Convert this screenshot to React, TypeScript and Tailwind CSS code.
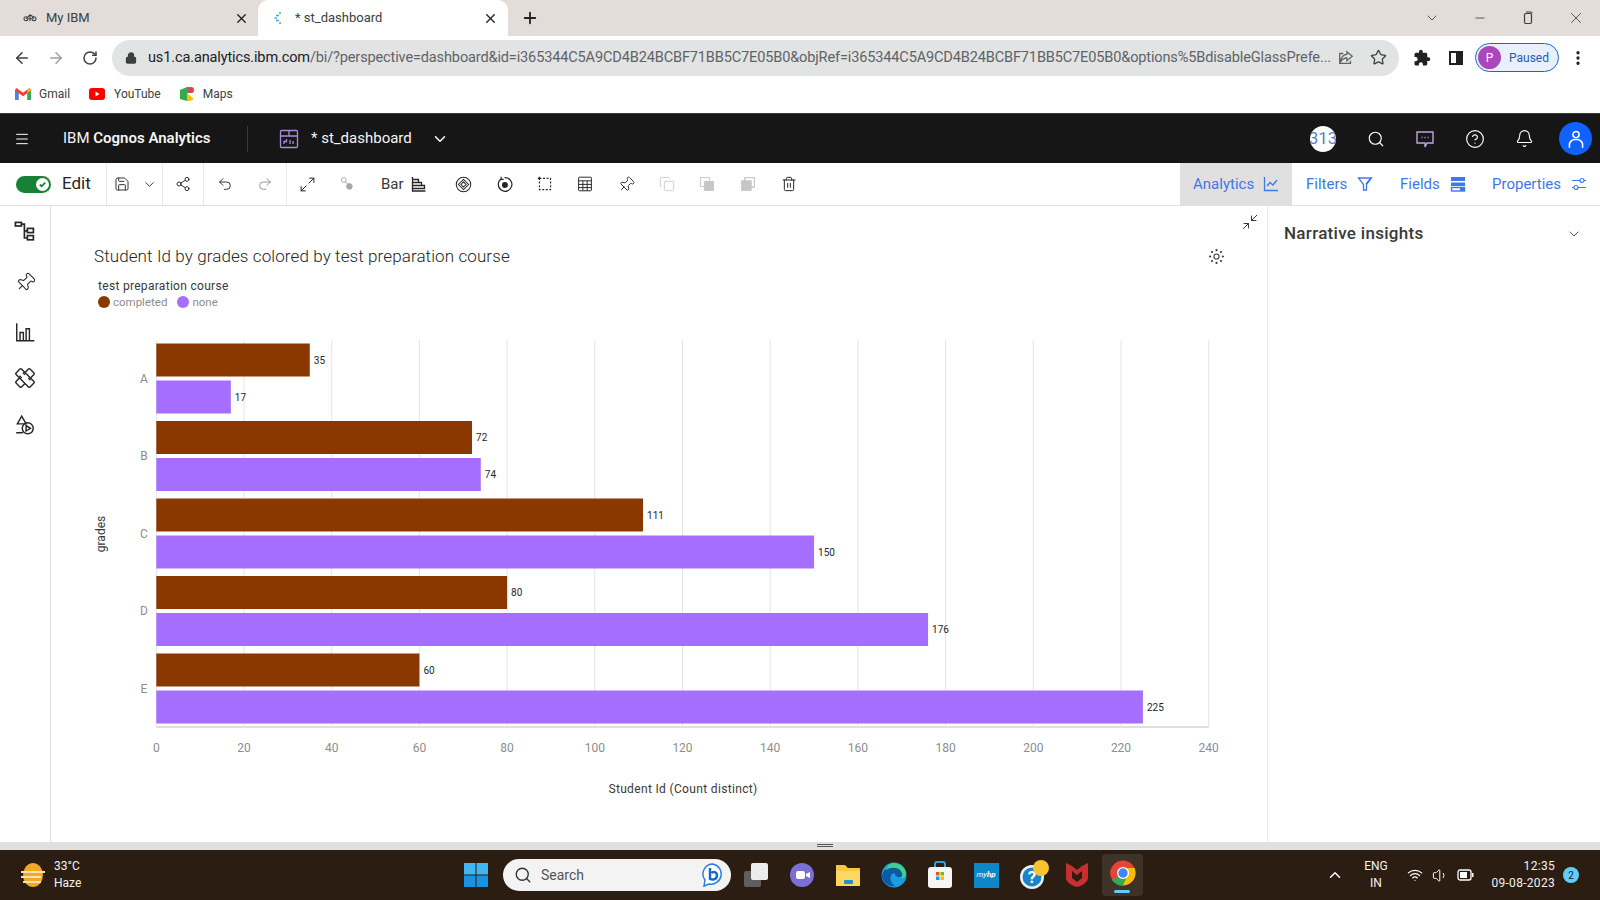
import React from "react";
import { ArrowLeft, ArrowRight, RotateCw, Lock, Star, Plus, X, Minus, ChevronDown, Menu, Search, CircleHelp, Bell, Save, Share2, Undo2, Redo2, Maximize2, Minimize2, Trash2, Pin, Copy, EllipsisVertical, ChevronUp, Wifi, Volume1 } from "lucide-react";

const GRADES = [
  { g: "A", c: 35, n: 17 },
  { g: "B", c: 72, n: 74 },
  { g: "C", c: 111, n: 150 },
  { g: "D", c: 80, n: 176 },
  { g: "E", c: 60, n: 225 },
];
const X0 = 156.3;
const U = 4.385;
const TICKS = [0, 20, 40, 60, 80, 100, 120, 140, 160, 180, 200, 220, 240];

function Chart() {
  return (
    <svg viewBox="51 320 1216 490" className="w-[1216px] h-[490px] block mt-[10px]" fontFamily="Roboto, sans-serif">
      {TICKS.map((t) => (
        <line key={t} x1={X0 + t * U} x2={X0 + t * U} y1={340} y2={727} stroke="#e4e4e4" strokeWidth={1} />
      ))}
      <line x1={X0} x2={X0 + 240 * U} y1={727} y2={727} stroke="#d4d4d4" strokeWidth={1.5} />
      {GRADES.map((d, i) => {
        const y = 343.5 + i * 77.5;
        return (
          <g key={d.g}>
            <rect x={X0} y={y} width={d.c * U} height={33} fill="#8a3800" />
            <rect x={X0} y={y + 37} width={d.n * U} height={33} fill="#a56eff" />
            <text x={X0 + d.c * U + 4} y={y + 20} fontSize={10} fill="#262626">{d.c}</text>
            <text x={X0 + d.n * U + 4} y={y + 57} fontSize={10} fill="#262626">{d.n}</text>
            <text x={144} y={y + 39} fontSize={12} fill="#8d8d8d" textAnchor="middle">{d.g}</text>
          </g>
        );
      })}
      {TICKS.map((t) => (
        <text key={t} x={X0 + t * U} y={752} fontSize={12} fill="#8d8d8d" textAnchor="middle">{t}</text>
      ))}
      <text x={683} y={793} fontSize={12} letterSpacing={0.34} fill="#393939" textAnchor="middle">Student Id (Count distinct)</text>
      <text transform="translate(105 534) rotate(-90)" fontSize={12} fill="#393939" textAnchor="middle">grades</text>
    </svg>
  );
}

function Ic({ children, s = 20, c = "none", stroke = "currentColor", w = 1.4, vb = "0 0 20 20" }: { children: React.ReactNode; s?: number; c?: string; stroke?: string; w?: number; vb?: string }) {
  return (
    <svg width={s} height={s} viewBox={vb} fill={c} stroke={stroke} strokeWidth={w} className="block shrink-0">
      {children}
    </svg>
  );
}

function Cell({ className, children }: { className: string; children: React.ReactNode }) {
  return <div className={`flex items-center justify-center shrink-0 ${className}`}>{children}</div>;
}

function TabBar() {
  return (
    <div className="flex h-[36px] bg-[#e3dcd8] shrink-0 text-[13px] text-[#3c4043] items-center">
      <div className="flex items-center w-[258px] h-full">
        <div className="ml-[21px] w-[18px] flex justify-center">
          <Ic s={16} w={1.3}>
            <circle cx="5" cy="11" r="2.5" />
            <circle cx="15" cy="11" r="2.5" />
            <path d="M5 11l4-4h3l3 4M8 11h4M10 5v9" />
          </Ic>
        </div>
        <span className="ml-[7px]">My IBM</span>
        <X size={15} strokeWidth={2.2} className="ml-auto mr-[9px] text-[#202124]" />
      </div>
      <div className="flex items-center w-[250px] h-full bg-white rounded-t-[10px]">
        <div className="ml-[15px] w-[10px]">
          <Ic s={12} stroke="#4ba3d9" w={1.4} vb="0 0 12 12">
            <path d="M8 1H6M6 3.5H3M4 6H1.5M6 8.5H3M8 11H6" />
          </Ic>
        </div>
        <span className="ml-[12px]">* st_dashboard</span>
        <X size={15} strokeWidth={2.2} className="ml-auto mr-[10px] text-[#202124]" />
      </div>
      <Plus size={18} strokeWidth={2.4} className="ml-[13px] text-[#202124]" />
      <div className="ml-auto flex text-[#3c3c3c]">
        <Cell className="w-[48px]"><ChevronDown size={16} strokeWidth={1.2} /></Cell>
        <Cell className="w-[48px]"><Minus size={14} strokeWidth={1.4} /></Cell>
        <Cell className="w-[48px]">
          <Ic s={14} w={1.2} vb="0 0 14 14"><rect x="3.5" y="2.5" width="7" height="10" rx="1.5" /><path d="M5 1h4.5a1.5 1.5 0 0 1 1.5 1.5" /></Ic>
        </Cell>
        <Cell className="w-[48px]"><X size={18} strokeWidth={1.1} /></Cell>
      </div>
    </div>
  );
}

function UrlBar() {
  return (
    <div className="flex items-center h-[43px] bg-white shrink-0">
      <div className="flex pl-[5px] w-[112px] text-[#3c4043]">
        <Cell className="w-[34px]"><ArrowLeft size={18} strokeWidth={2} /></Cell>
        <Cell className="w-[34px] text-[#9aa0a6]"><ArrowRight size={18} strokeWidth={2} /></Cell>
        <Cell className="w-[34px]"><RotateCw size={16} strokeWidth={2.2} /></Cell>
      </div>
      <div className="flex items-center w-[1287px] h-[36px] rounded-full bg-[#e2e3e3]">
        <Lock size={12} strokeWidth={2.6} className="ml-[13px] text-[#3c4043] shrink-0" fill="#3c4043" />
        <span className="ml-[11px] text-[14.55px] tracking-[-0.01em] whitespace-nowrap text-[#5f6368] w-[1180px]">
          <span className="text-[#202124]">us1.ca.analytics.ibm.com</span>/bi/?perspective=dashboard&amp;id=i365344C5A9CD4B24BCBF71BB5C7E05B0&amp;objRef=i365344C5A9CD4B24BCBF71BB5C7E05B0&amp;options%5BdisableGlassPrefe...
        </span>
        <div className="ml-[9px]">
          <Ic s={18} stroke="#5f6368" w={1.4}>
            <path d="M11 3l6 5-6 5v-3c-3 0-5 1-7 4 0-4 3-8 7-8zM15 13v3H3V5h4" />
          </Ic>
        </div>
        <Star size={17} strokeWidth={1.8} className="ml-[15px] text-[#3c4043]" />
      </div>
      <Cell className="w-[44px] ml-[1px]">
        <Ic s={18} c="#202124" stroke="none" vb="0 0 24 24">
          <path d="M20.5 11H19V7a2 2 0 0 0-2-2h-4V3.5a2.5 2.5 0 0 0-5 0V5H4a2 2 0 0 0-2 2v3.8h1.5a2.7 2.7 0 0 1 0 5.4H2V20a2 2 0 0 0 2 2h3.8v-1.5a2.7 2.7 0 0 1 5.4 0V22H17a2 2 0 0 0 2-2v-4h1.5a2.5 2.5 0 0 0 0-5z" />
        </Ic>
      </Cell>
      <Cell className="w-[24px]">
        <Ic s={16} stroke="#202124" w={2} vb="0 0 16 16"><rect x="2" y="2" width="12" height="12" /><rect x="9" y="2" width="5" height="12" fill="#202124" /></Ic>
      </Cell>
      <div className="ml-[7px] flex items-center w-[84px] h-[29px] rounded-full border border-[#1a66c9] bg-[#e8f0fb]">
        <div className="ml-[2px] w-[23px] h-[23px] rounded-full bg-[#ab47bc] text-white text-[12px] flex items-center justify-center">P</div>
        <span className="ml-[8px] text-[12px] text-[#1a5fb4]">Paused</span>
      </div>
      <Cell className="w-[38px]"><EllipsisVertical size={18} strokeWidth={2.4} className="text-[#202124]" /></Cell>
    </div>
  );
}

function Bookmarks() {
  return (
    <div className="flex items-center h-[34px] bg-white shrink-0 text-[12px] text-[#3c4043] pl-[15px] pb-[4px]">
      <svg width="16" height="12" viewBox="0 0 16 12" className="block">
        <path d="M0 2v10h3.5V5L8 8.2 12.500 5v7H16V2L14.500 0 8 4.700 1.500 0z" fill="#ea4335" />
        <path d="M0 3v9h3.500V5z" fill="#4285f4" />
        <path d="M16 3v9h-3.500V5z" fill="#34a853" />
        <path d="M12.500 5L16 2.500 14.500 0l-2 1.500z" fill="#fbbc04" />
      </svg>
      <span className="ml-[8px]">Gmail</span>
      <svg width="16" height="12" viewBox="0 0 16 12" className="block ml-[19px]">
        <rect width="16" height="12" rx="3" fill="#f00" />
        <path d="M6.500 3.500v5l4-2.500z" fill="#fff" />
      </svg>
      <span className="ml-[9px]">YouTube</span>
      <svg width="16" height="16" viewBox="0 0 16 16" className="block ml-[18px]">
        <path d="M1 4l7-3v14l-7-2z" fill="#34a853" />
        <path d="M8 7l7 6-4 2-3 0z" fill="#fbbc04" />
        <path d="M8 1l4 0 2 6-6 0z" fill="#4285f4" />
        <circle cx="12" cy="4" r="3" fill="#ea4335" />
      </svg>
      <span className="ml-[8px]">Maps</span>
    </div>
  );
}

function AppHeader() {
  return (
    <div className="flex items-center h-[50px] bg-[#161616] shrink-0 text-white border-t border-[#393939]">
      <Cell className="w-[44px]"><Menu size={16} strokeWidth={1.5} /></Cell>
      <span className="ml-[19px] w-[184px] text-[15px] text-[#f4f4f4] whitespace-nowrap">IBM <b className="font-semibold">Cognos Analytics</b></span>
      <div className="w-px h-[26px] bg-[#393939]" />
      <div className="ml-[31px]">
        <Ic s={20} stroke="#a98bdc" w={1.3}>
          <rect x="1.500" y="1.500" width="17" height="17" rx="1" />
          <path d="M1.500 7h17M10 1.500V7M5 15v-2.500h2.500V10M11 15v-4M14 15v-3" />
        </Ic>
      </div>
      <span className="ml-[12px] text-[15px] text-[#f4f4f4] w-[110px] whitespace-nowrap">* st_dashboard</span>
      <ChevronDown size={18} strokeWidth={2} className="ml-[10px]" />
      <div className="ml-auto flex items-center">
        <div className="w-[26px] h-[26px] rounded-full bg-white text-[#5b7fc5] text-[17px] overflow-hidden flex items-center justify-center mr-[15px]">313</div>
        <Cell className="w-[49px]"><Search size={18} strokeWidth={1.5} /></Cell>
        <Cell className="w-[50px]">
          <Ic s={20} stroke="#bca6e0" w={1.4}>
            <path d="M2 3h16v11h-6l-2 4v-4H2z" />
            <path d="M6.500 8.500h1M9.500 8.500h1M12.500 8.500h1" />
          </Ic>
        </Cell>
        <Cell className="w-[50px]"><CircleHelp size={20} strokeWidth={1.4} /></Cell>
        <Cell className="w-[49px]"><Bell size={19} strokeWidth={1.4} /></Cell>
        <div className="ml-[10px] mr-[8px] w-[33px] h-[33px] rounded-full bg-[#0f62fe] flex items-center justify-center">
          <Ic s={22} stroke="#fff" w={1.4}>
            <circle cx="10" cy="6" r="2.800" />
            <path d="M4 18v-2.500a5 5 0 0 1 5-5h2a5 5 0 0 1 5 5V18" />
          </Ic>
        </div>
      </div>
    </div>
  );
}

function Tb({ children }: { children: React.ReactNode }) {
  return <Cell className="w-[40.7px] h-full">{children}</Cell>;
}

function ToolBar() {
  return (
    <div className="flex items-stretch h-[43px] bg-white shrink-0 border-b border-[#e0e0e0] text-[#262626]">
      <div className="w-[107px] flex items-center pl-[16px] border-r border-[#e8e8e8] shrink-0">
        <div className="w-[35px] h-[17px] rounded-full bg-[#198038] flex items-center justify-end pr-[2px]">
          <div className="w-[13px] h-[13px] rounded-full bg-white flex items-center justify-center">
            <Ic s={9} stroke="#198038" w={2} vb="0 0 10 10"><path d="M2 5l2 2 4-4" /></Ic>
          </div>
        </div>
        <span className="ml-[11px] text-[17px]">Edit</span>
      </div>
      <div className="w-[56px] flex items-center border-r border-[#e8e8e8] shrink-0 pl-[7px]">
        <Save size={16} strokeWidth={1.4} />
        <ChevronDown size={15} strokeWidth={1.4} className="ml-[12px]" />
      </div>
      <Cell className="w-[41px] border-r border-[#e8e8e8]"><Share2 size={16} strokeWidth={1.4} /></Cell>
      <div className="w-[83px] flex border-r border-[#e8e8e8] shrink-0">
        <Cell className="w-[41px]"><Undo2 size={16} strokeWidth={1.4} /></Cell>
        <Cell className="w-[40px] text-[#8d8d8d]"><Redo2 size={16} strokeWidth={1.4} /></Cell>
      </div>
      <Cell className="w-[40px]"><Maximize2 size={17} strokeWidth={1.4} /></Cell>
      <Cell className="w-[40px]">
        <Ic s={16} stroke="#a8a8a8" w={1.2}><circle cx="6" cy="5" r="3" /><circle cx="13" cy="13" r="3.500" fill="#a8a8a8" /><path d="M8 7l3 4" /></Ic>
      </Cell>
      <div className="w-[76px] shrink-0 flex items-center pl-[14px]">
        <span className="text-[15px] text-[#393939]">Bar</span>
        <div className="ml-[7px]">
          <Ic s={16} w={1.3} vb="0 0 16 16"><path d="M1.500 1v14h13M1.500 3.500h6v3h-6M1.500 6.500h9v3h-9M1.500 9.500h12v3h-12" /></Ic>
        </div>
      </div>
      <Tb>
        <Ic s={17} w={1.2}><circle cx="10" cy="10" r="8.500" /><path d="M10 4l6 6-6 6-6-6z" /><path d="M10 7l3 3-3 3-3-3z" /></Ic>
      </Tb>
      <Tb>
        <Ic s={17} w={1.4}><path d="M6 3.500a8 8 0 1 0 4-1.500M6 1v3h3" /><circle cx="10.500" cy="10.500" r="2.800" fill="currentColor" /></Ic>
      </Tb>
      <Tb>
        <Ic s={16} w={1.4}><path d="M3 3h14v14H3z" strokeDasharray="2.500 2" /><path d="M1 3h4M3 1v4" /></Ic>
      </Tb>
      <Tb>
        <Ic s={16} w={1.2}><rect x="2" y="1.500" width="16" height="17" rx="1" /><path d="M2 6h16M2 10.500h16M2 14.500h16M7.300 6v12.500M12.700 6v12.500" /></Ic>
      </Tb>
      <Tb><Pin size={17} strokeWidth={1.3} className="rotate-45" /></Tb>
      <Tb><Copy size={16} strokeWidth={1.3} className="text-[#c6c6c6]" /></Tb>
      <Tb>
        <Ic s={16} stroke="#c6c6c6" w={1.2}><rect x="2" y="2" width="11" height="11" /><rect x="7" y="7" width="11" height="11" fill="#c6c6c6" /></Ic>
      </Tb>
      <Tb>
        <Ic s={16} stroke="#c6c6c6" w={1.2}><rect x="6" y="2" width="12" height="12" fill="#fff" /><rect x="2" y="6" width="12" height="12" fill="#c6c6c6" /><rect x="6" y="2" width="12" height="12" /></Ic>
      </Tb>
      <Tb><Trash2 size={16} strokeWidth={1.5} /></Tb>
      <div className="ml-auto flex text-[#4178e8] text-[15px]">
        <div className="w-[112px] flex items-center justify-between pl-[13px] pr-[13px] bg-[#e0e0e0]">
          <span>Analytics</span>
          <Ic s={16} w={1.3} vb="0 0 16 16"><path d="M1.500 1v13.500H15M4 10l3-3.500 3 2.500 4-5" /></Ic>
        </div>
        <div className="w-[96px] flex items-center justify-between pl-[14px] pr-[15px]">
          <span>Filters</span>
          <Ic s={16} w={1.3} vb="0 0 16 16"><path d="M1.500 2h13L9.500 8.500V14h-3V8.500z" /><path d="M9 8l5-6" /></Ic>
        </div>
        <div className="w-[92px] flex items-center justify-between pl-[12px] pr-[14px]">
          <span>Fields</span>
          <Ic s={16} c="currentColor" stroke="none" vb="0 0 16 16"><rect x="1" y="1" width="14" height="4" /><rect x="1" y="6.500" width="14" height="3.500" /><rect x="1.500" y="11.500" width="13" height="3.500" fill="none" stroke="currentColor" /><rect x="10" y="11.500" width="5" height="3.500" /></Ic>
        </div>
        <div className="w-[120px] flex items-center justify-between pl-[12px] pr-[13px]">
          <span>Properties</span>
          <Ic s={16} w={1.2} vb="0 0 16 16"><path d="M1 4.500h8M13 4.500h2M1 11.500h2M7 11.500h8" /><circle cx="11" cy="4.500" r="2" /><circle cx="5" cy="11.500" r="2" /></Ic>
        </div>
      </div>
    </div>
  );
}

function LeftRail() {
  return (
    <div className="w-[51px] shrink-0 border-r border-[#e0e0e0] flex flex-col items-center pt-[1px] text-[#262626]">
      <Cell className="h-[50px]">
        <Ic s={24} w={1.4}>
          <rect x="2" y="2" width="5" height="3" />
          <rect x="12" y="7" width="5" height="3.500" />
          <rect x="12" y="13" width="5" height="3.500" />
          <path d="M7 3.500h2.500V15H12M9.500 9H12" />
        </Ic>
      </Cell>
      <Cell className="h-[50px]"><Pin size={21} strokeWidth={1.2} className="rotate-45" /></Cell>
      <Cell className="h-[50px]">
        <Ic s={22} w={1.3}><path d="M2.500 2v16h16M5.500 17.500v-7h3v7M11 17.500V7h3v10.500" /></Ic>
      </Cell>
      <Cell className="h-[42px]">
        <Ic s={22} w={1.3}>
          <rect x="6.500" y="1" width="7" height="18" rx="1" transform="rotate(45 10 10)" />
          <rect x="6.500" y="1" width="7" height="18" rx="1" transform="rotate(-45 10 10)" fill="#fff" />
          <path d="M5 8l2 2M8 5l2 2M13 10l2 2" />
        </Ic>
      </Cell>
      <Cell className="h-[52px]">
        <Ic s={22} w={1.3}><path d="M7 2l4 7H3zM2 17h6" /><circle cx="12.500" cy="13" r="5" /><path d="M11 10.500v5l4-2.500z" /></Ic>
      </Cell>
    </div>
  );
}

function ChartPanel() {
  return (
    <div className="w-[1216px] shrink-0 flex flex-col relative">
      <Minimize2 size={18} strokeWidth={1.2} className="absolute left-[1190px] top-[7px] text-[#262626]" />
      <div className="absolute left-[1157px] top-[42px] text-[#393939]">
        <svg width="17" height="17" viewBox="0 0 20 20" fill="currentColor" className="block">
          <circle cx="10" cy="10" r="3" fill="none" stroke="currentColor" strokeWidth="1.300" />
          <circle cx="10" cy="2.500" r="1.300" />
          <circle cx="10" cy="17.500" r="1.300" />
          <circle cx="2.500" cy="10" r="1.300" />
          <circle cx="17.500" cy="10" r="1.300" />
          <circle cx="4.700" cy="4.700" r="1.300" />
          <circle cx="15.300" cy="4.700" r="1.300" />
          <circle cx="4.700" cy="15.300" r="1.300" />
          <circle cx="15.300" cy="15.300" r="1.300" />
        </svg>
      </div>
      <h2 className="pl-[43px] pt-[38px] text-[17px] tracking-[0.1px] leading-[24px] font-light text-[#262626]">Student Id by grades colored by test preparation course</h2>
      <div className="pl-[47px] pt-[10px] text-[12px] leading-[16px]">
        <div className="text-[#393939] tracking-[0.3px]">test preparation course</div>
        <div className="flex items-center text-[#8d8d8d] text-[11.5px]">
          <span className="w-[12px] h-[12px] rounded-full bg-[#8a3800]" />
          <span className="ml-[3px]">completed</span>
          <span className="ml-[10px] w-[12px] h-[12px] rounded-full bg-[#a56eff]" />
          <span className="ml-[3px]">none</span>
        </div>
      </div>
      <Chart />
    </div>
  );
}

function RightPanel() {
  return (
    <div className="flex-1 border-l border-[#e8e8e8]">
      <div className="flex items-center justify-between pl-[16px] pr-[18px] pt-[15px]">
        <span className="text-[17px] tracking-[0.3px] font-medium text-[#393939]">Narrative insights</span>
        <ChevronDown size={16} strokeWidth={1.3} className="text-[#393939]" />
      </div>
    </div>
  );
}

function Taskbar() {
  return (
    <div className="flex items-center h-[50px] bg-[#2c1d12] shrink-0 text-white relative">
      <div className="w-[54px] pl-[21px] shrink-0">
        <svg width="24" height="26" viewBox="0 0 24 26" className="block">
          <ellipse cx="12" cy="13" rx="10" ry="12" fill="#f5a623" />
          <path d="M0 10h24M0 15h20M2 20h18" stroke="#fbe3ae" strokeWidth="2" />
        </svg>
      </div>
      <div className="w-[50px] shrink-0 text-[12px] leading-[17px] text-[#f2f2f2]">
        <div>33°C</div>
        <div>Haze</div>
      </div>
      <div className="ml-[360px] shrink-0">
        <svg width="24" height="24" viewBox="0 0 24 24" className="block">
          <rect width="11.500" height="11.500" fill="#3fb5f1" />
          <rect x="12.500" width="11.500" height="11.500" fill="#3fb5f1" />
          <rect y="12.500" width="11.500" height="11.500" fill="#1a93e0" />
          <rect x="12.500" y="12.500" width="11.500" height="11.500" fill="#1a93e0" />
        </svg>
      </div>
      <div className="ml-[15px] w-[228px] h-[32px] rounded-full bg-[#f3f3f3] flex items-center shrink-0 text-[#333]">
        <Search size={18} strokeWidth={1.8} className="ml-[11px]" />
        <span className="ml-[9px] text-[14px] text-[#555]">Search</span>
        <div className="ml-auto mr-[6px]">
          <svg width="24" height="26" viewBox="0 0 24 26" className="block">
            <path d="M12 2a10 10 0 0 0-8 16l-1 6 5-2a10 10 0 1 0 4-20z" fill="#fff" stroke="#2a7de1" strokeWidth="1.500" />
            <path d="M9 6v11c3 1.500 7 0 7-3.500S12 9 10.500 11" fill="none" stroke="#1769c7" strokeWidth="2.500" />
          </svg>
        </div>
      </div>
      <Cell className="ml-[2px] w-[46px]">
        <svg width="26" height="26" viewBox="0 0 26 26" className="block">
          <rect x="1" y="9" width="17" height="16" rx="2" fill="#5e5e5e" />
          <rect x="8" y="1" width="17" height="17" rx="2" fill="#ececec" />
        </svg>
      </Cell>
      <Cell className="w-[46px]">
        <svg width="26" height="26" viewBox="0 0 26 26" className="block">
          <circle cx="13" cy="13" r="12" fill="#7b6fd6" />
          <rect x="7" y="9" width="9" height="8" rx="2" fill="#fff" />
          <path d="M17 12l4-2v6l-4-2z" fill="#fff" />
        </svg>
      </Cell>
      <Cell className="w-[46px]">
        <svg width="26" height="26" viewBox="0 0 26 26" className="block">
          <path d="M1 3h9l3 3h12v18H1z" fill="#f7c93e" />
          <rect x="1" y="9" width="24" height="15" fill="#fbd860" />
          <rect x="9" y="18" width="9" height="4" rx="1" fill="#1f8fd6" />
        </svg>
      </Cell>
      <Cell className="w-[46px]">
        <svg width="26" height="26" viewBox="0 0 26 26" className="block">
          <circle cx="13" cy="13" r="12.500" fill="#1b9de2" />
          <path d="M1 13C3 5 14 2 21 7c4 3 4 7 1 8-3 1-9 0-8-4-5 0-7 8 0 13C7 25 1 20 1 13z" fill="#0c59a4" />
          <path d="M13 1c6 0 12 5 12 11 0 3-3 5-6 4 3-1 3-5 0-8-3-3-10-3-14 0 1-4 4-7 8-7z" fill="#3fd08a" />
        </svg>
      </Cell>
      <Cell className="w-[45px]">
        <svg width="26" height="28" viewBox="0 0 26 28" className="block">
          <path d="M8 7V3a2 2 0 0 1 2-2h6a2 2 0 0 1 2 2v4" fill="none" stroke="#2c9fd8" strokeWidth="2" />
          <rect x="1" y="6" width="24" height="21" rx="3" fill="#f5f5f5" />
          <rect x="9" y="11" width="3.500" height="3.500" fill="#f25022" />
          <rect x="13.500" y="11" width="3.500" height="3.500" fill="#7fba00" />
          <rect x="9" y="15.500" width="3.500" height="3.500" fill="#00a4ef" />
          <rect x="13.500" y="15.500" width="3.500" height="3.500" fill="#ffb900" />
        </svg>
      </Cell>
      <Cell className="w-[48px]">
        <div className="w-[25px] h-[25px] bg-[#0e87c9] flex items-center justify-center text-[8px] italic text-white">my<b>hp</b></div>
      </Cell>
      <Cell className="w-[47px]">
        <svg width="32" height="32" viewBox="0 0 32 32" className="block">
          <circle cx="14" cy="18" r="12" fill="#e6f3fb" />
          <circle cx="14" cy="18" r="9.500" fill="#1b84c9" />
          <text x="14" y="24" fontSize="17" fontWeight="700" fill="#fff" textAnchor="middle" fontFamily="Roboto, sans-serif">?</text>
          <circle cx="23" cy="9" r="8" fill="#f6c430" />
        </svg>
      </Cell>
      <Cell className="w-[40px]">
        <svg width="24" height="26" viewBox="0 0 24 26" className="block">
          <path d="M1 1l6 3 5 4 5-4 6-3v15c0 4-6 8-11 9C7 24 1 20 1 16z" fill="#c62f2f" />
          <path d="M7 9l5 4 5-4v7l-5 4-5-4z" fill="#2c1d12" />
        </svg>
      </Cell>
      <Cell className="ml-[5px] w-[41px] h-[42px] rounded-[4px] bg-[#3f3228] relative">
        <svg width="26" height="26" viewBox="0 0 26 26" className="block -mt-[4px]">
          <circle cx="13" cy="13" r="12.500" fill="#ea4335" />
          <path d="M13 13L2 19.500A12.500 12.500 0 0 0 13 25.500z" fill="#34a853" />
          <path d="M2.200 19.500A12.500 12.500 0 0 1 2.200 6.500L13 13l-4 8z" fill="#ea4335" />
          <path d="M13 25.500A12.500 12.500 0 0 0 24.500 8H13z" fill="#fbbc04" />
          <path d="M2 19.700a12.500 12.500 0 0 0 11 5.800L17 16h-8z" fill="#34a853" />
          <circle cx="13" cy="13" r="6" fill="#fff" />
          <circle cx="13" cy="13" r="4.700" fill="#4285f4" />
        </svg>
        <div className="absolute bottom-[3px] left-[12px] w-[16px] h-[3px] rounded-full bg-[#60cdff]" />
      </Cell>
      <Cell className="ml-[182px] w-[20px]"><ChevronUp size={18} strokeWidth={2} /></Cell>
      <div className="ml-[9px] w-[44px] shrink-0 text-[12px] leading-[17px] text-center text-[#f2f2f2]">
        <div>ENG</div>
        <div>IN</div>
      </div>
      <Cell className="ml-[6px] w-[22px]"><Wifi size={16} strokeWidth={1.8} /></Cell>
      <Cell className="ml-[3px] w-[22px]"><Volume1 size={17} strokeWidth={1.4} /></Cell>
      <Cell className="ml-[3px] w-[22px]">
        <svg width="17" height="12" viewBox="0 0 17 12" className="block">
          <rect x="1" y="1" width="13" height="10" rx="2" fill="none" stroke="#fff" strokeWidth="1.300" />
          <rect x="3" y="3" width="7" height="6" fill="#fff" />
          <rect x="15" y="4" width="1.500" height="4" fill="#fff" />
        </svg>
      </Cell>
      <div className="ml-[1px] w-[78px] shrink-0 text-[12px] leading-[17px] text-right text-[#f2f2f2] tracking-[0.3px] whitespace-nowrap">
        <div>12:35</div>
        <div>09-08-2023</div>
      </div>
      <div className="ml-[8px] w-[16px] h-[16px] rounded-full bg-[#60cdff] text-[#10202c] text-[10px] flex items-center justify-center">2</div>
    </div>
  );
}

export default function App() {
  return (
    <div className="w-[1600px] h-[900px] overflow-hidden flex flex-col bg-white font-['Roboto',sans-serif]">
      <TabBar />
      <UrlBar />
      <Bookmarks />
      <AppHeader />
      <ToolBar />
      <div className="flex h-[636px] shrink-0 overflow-hidden">
        <LeftRail />
        <ChartPanel />
        <RightPanel />
      </div>
      <div className="h-[8px] bg-[#e0e0e0] shrink-0 flex justify-center">
        <div className="mt-[2px] ml-[50px] w-[16px] h-[3px] border-y border-[#555]" />
      </div>
      <Taskbar />
    </div>
  );
}
